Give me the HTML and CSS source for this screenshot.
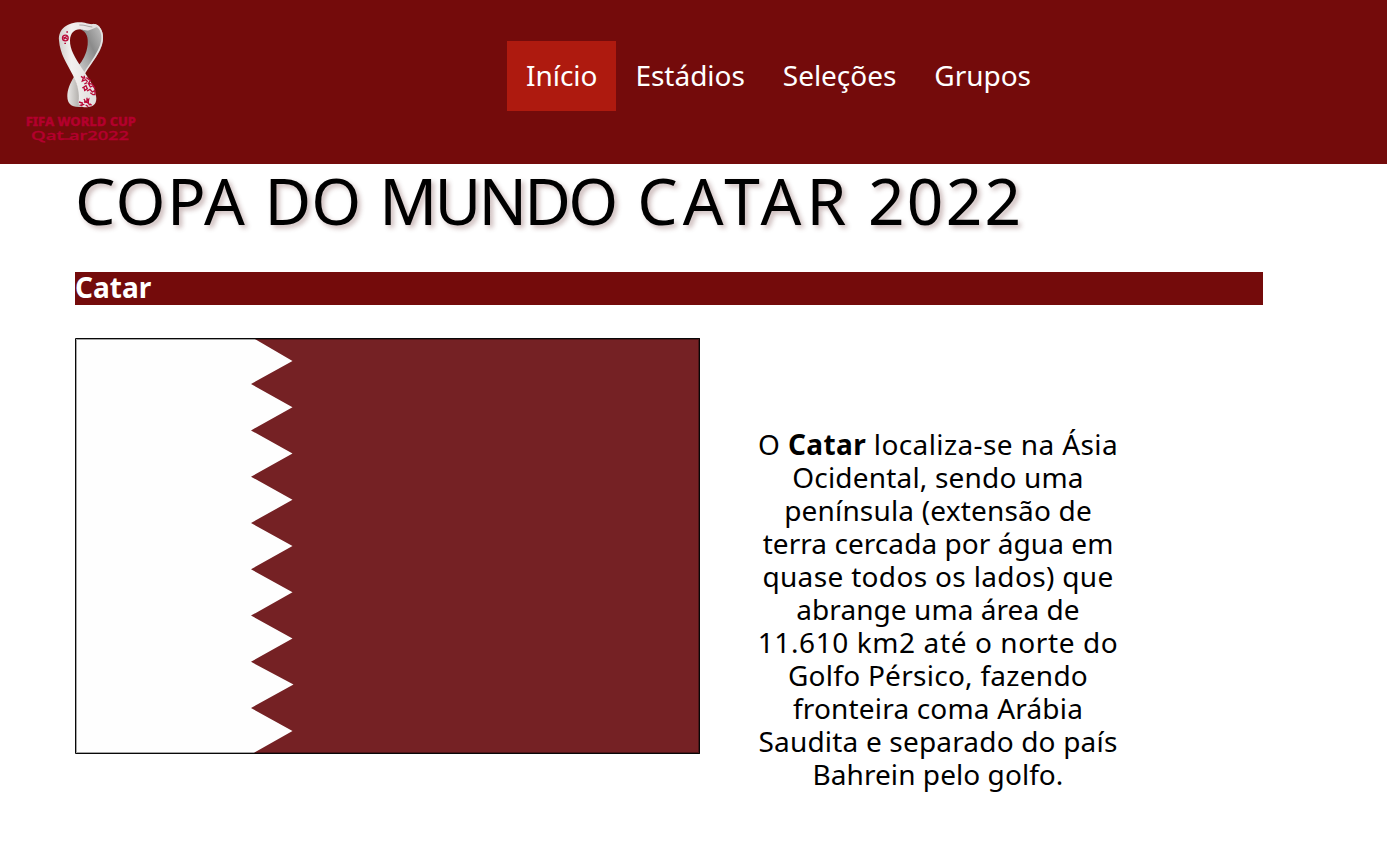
FILE: index.html
```
<!DOCTYPE html>
<html lang="pt-br">
<head>
<meta charset="utf-8">
<title>Copa do Mundo Catar 2022</title>
<link rel="stylesheet" href="styles.css">
</head>
<body>
<header class="header">
  <svg class="logo" viewBox="0 0 405 450" role="img" aria-label="FIFA World Cup Qatar 2022">
    <defs>
      <linearGradient id="band" x1="0" y1="0" x2="1" y2="0">
        <stop offset="0" stop-color="#d2cfcd"/><stop offset=".3" stop-color="#f3f1f0"/><stop offset="1" stop-color="#dedbda"/>
      </linearGradient>
      <linearGradient id="inner" x1="1" y1="0" x2="0" y2="1">
        <stop offset="0" stop-color="#c9c9c9"/><stop offset=".45" stop-color="#8b8b8b"/><stop offset="1" stop-color="#d0d0d0"/>
      </linearGradient>
      <linearGradient id="foot" x1="0" y1="0" x2="1" y2="0">
        <stop offset="0" stop-color="#e9e7e5"/><stop offset=".5" stop-color="#b9b6b3"/><stop offset="1" stop-color="#eeeceb"/>
      </linearGradient>
    </defs>
    <path fill="url(#inner)" d="M196 58C216 66 220 84 218 104C215 131 203 153 190 166L204 194C222 162 260 134 264 90C266 62 253 43 236 42L198 48Z"/>
    <path fill="none" stroke="#e6e4e3" stroke-width="5" d="M234 44C255 47 264 67 261 92C257 128 224 161 208 190"/>
    <path fill="url(#foot)" d="M178 199C164 222 157 240 157 259C157 281 168 291 191 291H220L200 262C193 240 184 219 178 199Z"/>
    <path fill="url(#band)" d="M132 91C129 57 158 37 194 37C211 37 218 42 230 43C243 40 250 46 254 51C242 50 235 57 222 61C212 63 206 59 196 58C176 58 166 71 165 91C164 119 181 144 200 174C222 207 243 234 244 265C244 285 233 292 208 292C194 291 191 283 191 274C195 253 188 223 173 194C155 160 135 132 132 91Z"/>
    <path fill="none" stroke="#aaa7a6" stroke-width="3" d="M193 45C210 44 217 50 232 51"/>
    <g fill="none" stroke="#b90a38" stroke-width="4">
      <circle cx="151" cy="84" r="8.5"/><path d="M145 81l12 6M146 88l9-9M154 66h5M148 100h5"/>
      <path d="M198 199l7 5l-3 9l10-4l6 6M207 197l3 9M214 203l12 8l-5 9l13 3M202 234l11-7l4 9l-8 5l-2-8M219 218l7 13l9-4l5 9M216 243l9-5l7 8l9-5M226 248l8 6h8M208 222l8-4M240 240v12"/>
      <path d="M192 276l10 3l-2 10M194 286l14-3M207 267l5 9l9-8l-2 12l7 6M207 276l15 2M212 285l8 5M224 281l6 5M216 263v8"/>
    </g>
    <g class="logo-text">
      <text class="logo-cup" x="32" y="348" textLength="331" lengthAdjust="spacingAndGlyphs">FIFA WORLD CUP</text>
      <text x="48" y="389" textLength="98" lengthAdjust="spacingAndGlyphs">Qat</text>
      <text x="162" y="389" textLength="180" lengthAdjust="spacingAndGlyphs">ar2022</text>
      <path d="M137 387h30M73 388q8 8 18 8" fill="none" stroke="#b3002d" stroke-width="5"/>
    </g>
  </svg>
  <nav class="menu">
    <a class="item active">Início</a>
    <a class="item">Estádios</a>
    <a class="item">Seleções</a>
    <a class="item">Grupos</a>
  </nav>
</header>
<main class="content">
  <h1 class="title">COPA <span class="t-do">DO</span> <span class="t-mundo">MUNDO</span> <span class="t-catar">CATAR</span> <span class="t-year">2022</span></h1>
  <h2 class="bar">Catar</h2>
  <section class="country">
    <svg class="flag" viewBox="0 0 625 416" role="img" aria-label="Bandeira do Catar">
      <rect width="625" height="416" fill="#fefefe"/>
      <path fill="#752124" d="M178 0L217.500 23L176 46L217.500 69.200L176 92.400L217.500 115.500L176 138.700L217.500 161.800L176 185L217.500 208L176 231.300L217.500 254.300L176 277.600L217.500 300.600L176 323.800L218.500 346.500L176 370L217.500 393L177 416H625V0Z"/>
      <path fill="none" stroke="#000" stroke-opacity=".35" d="M1.500 1.500H623.500V414.500H1.500Z"/>
      <path fill="none" stroke="#080808" d="M.5 .5H624.500V415.500H.5Z"/>
    </svg>
    <p class="text">
      <span class="line w5">O <strong>Catar</strong> localiza-se na Ásia</span>
      <span class="line w2">Ocidental, sendo uma</span>
      <span class="line w2">península (extensão de</span>
      <span class="line w1">terra cercada por água em</span>
      <span class="line w4">quase todos os lados) que</span>
      <span class="line w1">abrange uma área de</span>
      <span class="line w6">11.610 km2 até o norte do</span>
      <span class="line w3">Golfo Pérsico, fazendo</span>
      <span class="line w2">fronteira coma Arábia</span>
      <span class="line w2">Saudita e separado do país</span>
      <span class="line w1">Bahrein pelo golfo.</span>
    </p>
  </section>
</main>
</body>
</html>
```
FILE: styles.css
```
* { box-sizing: border-box; margin: 0; padding: 0; }
body { background: #fff; color: #000; font-family: "Lucida Sans", "Noto Sans", sans-serif; font-size: 28px; }
.header { display: flex; align-items: flex-start; height: 164px; padding: 10px 0 0 15px; background: #740b0b; }
.logo { width: 135px; height: 150px; flex: none; }
.logo-text { fill: #b3002d; font-size: 38px; font-weight: 500; }
.logo-text text { stroke: #b3002d; stroke-width: 1; }
.logo-cup { font-size: 36px; font-weight: 800; }
.menu { display: flex; margin: 31px 0 0 357px; }
.item { height: 70px; padding: 0 19px; line-height: 68px; letter-spacing: -.03px; color: #fff; white-space: nowrap; }
.active { background: #ae1a0f; }
.content { padding: 0 124px 40px 75px; }
.title { font-size: 64px; font-weight: 400; line-height: 73px; letter-spacing: 1.45px; white-space: nowrap; text-shadow: 3px 3px 5px rgba(80, 20, 20, .3); }
.t-do { letter-spacing: -.05px; }
.t-mundo { letter-spacing: -2.8px; margin-right: 3.8px; }
.t-catar { letter-spacing: 5.1px; margin-right: -1.5px; }
.t-year { letter-spacing: 2.2px; }
.bar { margin-top: 35px; height: 33px; line-height: 30px; font-size: 28px; background: #740b0b; color: #fff; }
.country { display: flex; margin-top: 33px; }
.flag { width: 625px; height: 416px; flex: none; }
.text { width: 376px; margin: 90px 0 0 50px; padding-bottom: 10px; line-height: 33px; text-align: center; }
.line { display: block; white-space: nowrap; }
.w1 { letter-spacing: .06px; }
.w2 { letter-spacing: .18px; }
.w3 { letter-spacing: .27px; }
.w4 { letter-spacing: .34px; }
.w5 { letter-spacing: .4px; }
.w6 { letter-spacing: .6px; }
```
